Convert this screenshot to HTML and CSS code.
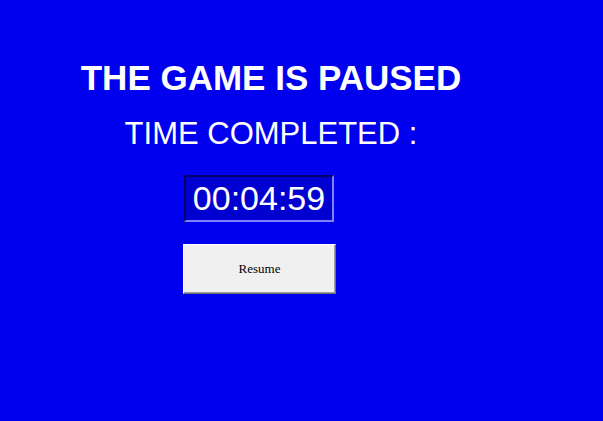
FILE: index.html
```html
<!DOCTYPE html>
<html>
<head>
<meta charset="utf-8">
<link rel="stylesheet" href="styles.css">
</head>
<body>
<main class="pause">
  <div class="headings">
    <h1 class="title">THE GAME IS PAUSED</h1>
    <h2 class="subtitle">TIME COMPLETED :</h2>
  </div>
  <div class="panel">
    <div class="timer">00:04:59</div>
    <button class="resume" type="button">Resume</button>
  </div>
</main>
</body>
</html>
```
FILE: styles.css
```css
html, body {
  margin: 0;
  height: 100%;
  background: #0000ee;
}
.pause {
  padding-top: 58px;
  font-family: "Liberation Sans", Arial, sans-serif;
  color: #ffffff;
}
.headings {
  width: 542px;
  text-align: center;
}
.title {
  margin: 0;
  font-size: 35px;
  line-height: 40px;
  font-weight: bold;
}
.subtitle {
  margin: 19px 0 0;
  font-size: 31px;
  line-height: 34px;
  font-weight: normal;
}
.panel {
  margin: 24px 0 0 183px;
  display: flex;
  flex-direction: column;
  align-items: flex-start;
  gap: 22px;
}
.timer {
  box-sizing: border-box;
  width: 150px;
  height: 47px;
  margin-left: 1px;
  border: 2px solid;
  border-color: #000066 #8080ff #8080ff #000066;
  background: #0000d0;
  font-size: 34px;
  line-height: 43px;
  text-align: center;
  color: #ffffff;
}
.resume {
  box-sizing: border-box;
  width: 153px;
  height: 50px;
  padding: 0;
  border: 1px solid;
  border-color: #ffffff #707070 #707070 #ffffff;
  box-shadow: inset -1px -1px 0 #a0a0a0;
  background: #f0f0f0;
  font-family: "Liberation Serif", "Times New Roman", serif;
  font-size: 13px;
  color: #000000;
}
```
